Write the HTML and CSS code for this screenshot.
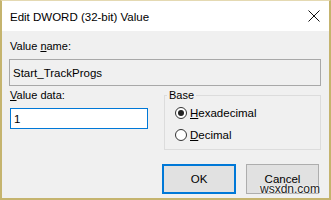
FILE: index.html
```html
<!DOCTYPE html>
<html lang="en">
<head>
    <meta charset="UTF-8">
    <title>Edit DWORD (32-bit) Value</title>
    <link rel="stylesheet" href="styles.css">
</head>
<body>
    <div class="window">
        <!-- Barra de título -->
        <div class="titlebar">
            <span class="title">Edit DWORD (32-bit) Value</span>
            <svg class="close" width="12" height="12" viewBox="0 0 12 12">
                <path d="M0.5 0.5 L11.5 11.5 M11.5 0.5 L0.5 11.5" stroke="#111" stroke-width="1" fill="none"/>
            </svg>
        </div>

        <div class="content">
            <div class="label">Value <u>n</u>ame:</div>
            <div class="field readonly">Start_TrackProgs</div>

            <div class="row">
                <div class="col-data">
                    <div class="label data-label"><u>V</u>alue data:</div>
                    <div class="field active">1</div>
                </div>

                <fieldset class="groupbox">
                    <legend>Base</legend>
                    <div class="radio"><span class="dot checked"></span><span><u>H</u>exadecimal</span></div>
                    <div class="radio"><span class="dot"></span><span><u>D</u>ecimal</span></div>
                </fieldset>
            </div>

            <div class="buttons">
                <div class="btn default">OK</div>
                <div class="btn">Cancel</div>
            </div>
        </div>

        <span class="watermark">wsxdn.com</span>
    </div>
</body>
</html>
```

FILE: styles.css
```css
body {
    margin: 0;
    padding: 0;
    font-family: "Liberation Sans", Arial, sans-serif;
    font-size: 11px;
    color: #000;
    background: #f0f0f0;
}

/* Ventana */
.window {
    position: relative;
    width: 331px;
    height: 200px;
    box-sizing: border-box;
    border: 2px solid #c5b46e;
    border-top: 1px solid #e4d9b2;
    background: #f0f0f0;
    overflow: hidden;
}

.titlebar {
    height: 30px;
    background: #fff;
    display: flex;
    align-items: center;
    justify-content: space-between;
    padding: 0 8px 0 8px;
}
.title {
    font-size: 11.5px;
    padding-top: 1px;
}
.close {
    display: block;
    margin-right: 1px;
}

/* Contenido */
.content {
    padding: 9px 8px 0 7px;
}
.label {
    line-height: 13px;
    padding-left: 1px;
}
.field {
    box-sizing: border-box;
    display: flex;
    align-items: center;
    padding-left: 3px;
    font-size: 11.5px;
}
.readonly {
    margin-top: 6px;
    height: 27px;
    border: 1px solid #a8a8a8;
    background: #f0f0f0;
}
.active {
    margin-top: 6px;
    margin-left: 1px;
    height: 21px;
    border: 1px solid #0078d7;
    background: #fff;
}

.row {
    display: flex;
    align-items: flex-start;
    justify-content: space-between;
}
.col-data {
    width: 139px;
}
.data-label {
    margin-top: 3px;
}

/* Grupo "Base" */
.groupbox {
    box-sizing: border-box;
    width: 157px;
    height: 61px;
    margin: 3px 0 0 0;
    padding: 0 0 0 2px;
    border: 1px solid #dcdcdc;
}
.groupbox legend {
    padding: 0 2px;
    margin-left: 0;
    line-height: 13px;
}
.radio {
    display: flex;
    align-items: center;
    gap: 3px;
    height: 22px;
    margin-left: 8px;
    font-size: 11.5px;
}
.dot {
    width: 12px;
    height: 12px;
    box-sizing: border-box;
    border: 1px solid #333;
    border-radius: 50%;
    background: #fff;
    display: flex;
    align-items: center;
    justify-content: center;
}
.dot.checked::after {
    content: "";
    width: 6px;
    height: 6px;
    border-radius: 50%;
    background: #222;
}

/* Botones */
.buttons {
    display: flex;
    justify-content: flex-end;
    gap: 10px;
    margin-top: 14px;
    padding-right: 2px;
}
.btn {
    box-sizing: border-box;
    width: 73px;
    height: 30px;
    display: flex;
    align-items: center;
    justify-content: center;
    background: #e1e1e1;
    border: 1px solid #adadad;
    font-size: 11.5px;
}
.btn.default {
    width: 74px;
    border: 2px solid #0078d7;
}

.watermark {
    position: absolute;
    right: 9px;
    bottom: 2px;
    font-size: 12px;
    color: #222;
    text-shadow: 0 0 2px #fff, 0 0 2px #fff;
}
```
